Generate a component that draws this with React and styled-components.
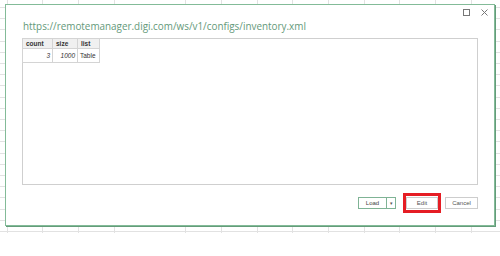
import React from 'react';
import styled, { createGlobalStyle } from 'styled-components';

const GlobalStyle = createGlobalStyle`
  html, body { margin: 0; padding: 0; background: #fff; }
  body { font-family: "Liberation Sans", Arial, sans-serif; }
`;

const rows = [{ count: 3, size: 1000, list: 'Table' }];

const App = () => {
  return (
    <>
      <GlobalStyle />
      <Sheet>
        <Dialog>
          <TitleBar>
            <svg width="7" height="7" viewBox="0 0 7 7">
              <rect x="0.5" y="0.5" width="6" height="6" fill="none" stroke="#777" strokeWidth="1" />
            </svg>
            <svg width="7" height="7" viewBox="0 0 7 7">
              <path d="M0.5 0.5 L6.5 6.5 M6.5 0.5 L0.5 6.5" stroke="#777" strokeWidth="1" />
            </svg>
          </TitleBar>
          <Title>https://remotemanager.digi.com/ws/v1/configs/inventory.xml</Title>
          <Preview>
            <Table>
              <thead>
                <tr>
                  <Th $w={30}>count</Th>
                  <Th $w={25}>size</Th>
                  <Th $w={22}>list</Th>
                </tr>
              </thead>
              <tbody>
                {rows.map((r, i) => (
                  <tr key={i}>
                    <Td $num>{r.count}</Td>
                    <Td $num>{r.size}</Td>
                    <Td>{r.list}</Td>
                  </tr>
                ))}
              </tbody>
            </Table>
          </Preview>
          <Footer>
            <SplitButton>
              <SplitMain>Load</SplitMain>
              <SplitArrow>▾</SplitArrow>
            </SplitButton>
            <Highlight>
              <Button>Edit</Button>
            </Highlight>
            <Button>Cancel</Button>
          </Footer>
        </Dialog>
      </Sheet>
    </>
  );
};

const Sheet = styled.div`
  width: 500px;
  height: 256px;
  box-sizing: border-box;
  padding: 4px 0 0 5px;
  background:
    linear-gradient(#fff, #fff) 0 233px / 100% 100% no-repeat,
    repeating-linear-gradient(90deg, transparent 0 6.7px, #e2e2e2 6.7px 7.7px, transparent 7.7px 35.7px),
    repeating-linear-gradient(180deg, transparent 0 7px, #e2e2e2 7px 8px, transparent 8px 11.2px),
    #fff;
`;

const Dialog = styled.div`
  width: 490px;
  height: 222px;
  box-sizing: border-box;
  background: #fff;
  border: 1px solid #83bb98;
  box-shadow: 1px 1px 0 #649c7a;
  display: flex;
  flex-direction: column;
  padding: 0 16px 0 16px;
`;

const TitleBar = styled.div`
  height: 14px;
  display: flex;
  justify-content: flex-end;
  align-items: flex-start;
  gap: 11px;
  margin-right: -10px;
  padding-top: 4px;
  box-sizing: border-box;
`;

const Title = styled.div`
  font-family: "Open Sans", "Liberation Sans", sans-serif;
  font-weight: 400;
  font-size: 9.9px;
  line-height: 14px;
  color: #64997a;
  margin-left: 1px;
  white-space: nowrap;
`;

const Preview = styled.div`
  height: 147px;
  box-sizing: border-box;
  border: 1px solid #cfcfcf;
  margin-top: 5px;
  background: #fff;
`;

const Table = styled.table`
  border-collapse: collapse;
  font-size: 6.5px;
  color: #333;
  margin: -1px 0 0 -1px;
`;

const Th = styled.th`
  width: ${(p) => p.$w}px;
  box-sizing: border-box;
  height: 10px;
  padding: 0 3px;
  text-align: left;
  font-weight: bold;
  background: #f0f0f0;
  border: 1px solid #d4d4d4;
`;

const Td = styled.td`
  height: 14px;
  box-sizing: border-box;
  padding: 0 2px;
  text-align: ${(p) => (p.$num ? 'right' : 'left')};
  font-style: ${(p) => (p.$num ? 'italic' : 'normal')};
  border: 1px solid #d4d4d4;
`;

const Footer = styled.div`
  display: flex;
  justify-content: flex-end;
  align-items: center;
  margin-top: 8px;
  gap: 4px;
`;

const SplitButton = styled.div`
  display: flex;
  height: 12px;
  border: 1px solid #7fb395;
  box-sizing: border-box;
  margin-right: 3px;
`;

const SplitMain = styled.div`
  width: 27px;
  font-size: 6px;
  color: #444;
  display: flex;
  align-items: center;
  justify-content: center;
  border-right: 1px solid #7fb395;
`;

const SplitArrow = styled.div`
  width: 8px;
  font-size: 5px;
  color: #555;
  display: flex;
  align-items: center;
  justify-content: center;
`;

const Highlight = styled.div`
  width: 38px;
  height: 20px;
  box-sizing: border-box;
  border: 3px solid #e51d24;
  display: flex;
  align-items: center;
  justify-content: center;
`;

const Button = styled.div`
  width: 33px;
  height: 12px;
  box-sizing: border-box;
  border: 1px solid #cdcdcd;
  font-size: 6px;
  color: #555;
  display: flex;
  align-items: center;
  justify-content: center;
  ${Highlight} > & {
    width: 32px;
  }
`;

export default App;
